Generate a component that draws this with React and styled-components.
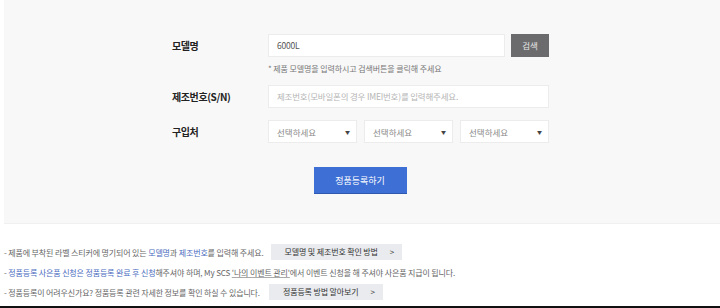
import React from "react";
import styled, { createGlobalStyle } from "styled-components";

const Global = createGlobalStyle`
  html, body {
    margin: 0;
    padding: 0;
    background: #fff;
  }
  body {
    font-family: "Noto Sans CJK KR", "Noto Sans", sans-serif;
  }
`;

const Page = styled.div`
  width: 720px;
  height: 308px;
  overflow: hidden;
  padding-left: 4px;
  box-sizing: border-box;
  border-bottom: 2px solid #111;
`;

const Panel = styled.div`
  background: #f8f8f8;
  padding: 34px 0 29px;
  border-bottom: 1px solid #f0f0f0;
`;

const Form = styled.div`
  margin-left: 168px;
  display: grid;
  grid-template-columns: 96px 281px;
  align-items: start;
`;

const Label = styled.div`
  font-size: 10px;
  font-weight: 700;
  color: #222;
  height: 23px;
  line-height: 23px;
  letter-spacing: -0.4px;
  margin-top: ${(p) => p.$top || 0}px;
`;

const Field = styled.div`
  margin-top: ${(p) => p.$top || 0}px;
`;

const InputRow = styled.div`
  display: flex;
  gap: 6px;
`;

const Input = styled.div`
  flex: 1;
  height: 23px;
  box-sizing: border-box;
  background: #fff;
  border: 1px solid #ececec;
  padding: 0 8px;
  font-size: 8.5px;
  line-height: 21px;
  color: ${(p) => (p.$placeholder ? "#b5b5b5" : "#555")};
  letter-spacing: -0.2px;
`;

const SearchButton = styled.div`
  width: 38px;
  height: 23px;
  background: #6b6b6d;
  color: #e6e6e6;
  font-size: 8.5px;
  line-height: 23px;
  text-align: center;
`;

const Hint = styled.div`
  margin-top: 6px;
  font-size: 8px;
  line-height: 11px;
  color: #777;
  letter-spacing: -0.1px;
`;

const Selects = styled.div`
  display: grid;
  grid-template-columns: repeat(3, 1fr);
  gap: 7px;
`;

const Select = styled.div`
  height: 23px;
  box-sizing: border-box;
  background: #fff;
  border: 1px solid #ececec;
  padding: 0 6px 0 8px;
  display: flex;
  align-items: center;
  justify-content: space-between;
  font-size: 8.5px;
  color: #8a8a8a;
`;

const Caret = styled.span`
  font-size: 5px;
  color: #444;
`;

const SubmitWrap = styled.div`
  display: flex;
  justify-content: center;
  margin-top: 24px;
  padding-right: 4px;
`;

const Submit = styled.div`
  width: 93px;
  height: 27px;
  background: #3e6fd5;
  border-bottom: 1px solid #2f58b0;
  box-sizing: border-box;
  color: #fff;
  font-size: 9px;
  line-height: 27px;
  text-align: center;
`;

const Notes = styled.div`
  padding-top: 20px;
  display: flex;
  flex-direction: column;
  gap: 4px;
`;

const Note = styled.div`
  display: flex;
  align-items: center;
  height: 16px;
  font-size: 8px;
  color: #666;
  letter-spacing: -0.14px;
  white-space: nowrap;
`;

const Blue = styled.span`
  color: #4a6cc0;
`;

const Under = styled.span`
  text-decoration: underline;
  text-decoration-color: #aaa;
`;

const NoteButton = styled.div`
  margin-left: ${(p) => p.$gap}px;
  height: 16px;
  background: #e9ebee;
  color: #333;
  font-size: 8px;
  line-height: 16px;
  padding: 0 8px 0 14px;
  display: flex;
  gap: ${(p) => p.$arrowGap}px;
  align-items: center;
`;

export default function App() {
  return (
    <>
      <Global />
      <Page>
        <Panel>
          <Form>
            <Label>모델명</Label>
            <Field>
              <InputRow>
                <Input>6000L</Input>
                <SearchButton>검색</SearchButton>
              </InputRow>
              <Hint>* 제품 모델명을 입력하시고 검색버튼을 클릭해 주세요</Hint>
            </Field>
            <Label $top={11}>제조번호(S/N)</Label>
            <Field $top={11}>
              <InputRow>
                <Input $placeholder>
                  제조번호(모바일폰의 경우 IMEI번호)를 입력해주세요.
                </Input>
              </InputRow>
            </Field>
            <Label $top={12}>구입처</Label>
            <Field $top={12}>
              <Selects>
                {[0, 1, 2].map((i) => (
                  <Select key={i}>
                    선택하세요
                    <Caret>▼</Caret>
                  </Select>
                ))}
              </Selects>
            </Field>
          </Form>
          <SubmitWrap>
            <Submit>정품등록하기</Submit>
          </SubmitWrap>
        </Panel>
        <Notes>
          <Note>
            - 제품에 부착된 라벨 스티커에 명기되어 있는&nbsp;<Blue>모델명</Blue>과&nbsp;
            <Blue>제조번호</Blue>를 입력해 주세요.
            <NoteButton $gap={7} $arrowGap={12}>
              모델명 및 제조번호 확인 방법 <span>&gt;</span>
            </NoteButton>
          </Note>
          <Note>
            -&nbsp;<Blue>정품등록 사은품 신청은 정품등록 완료 후 신청</Blue>해주셔야 하며, My SCS&nbsp;
            <Under>'나의 이벤트 관리'</Under>에서 이벤트 신청을 해 주셔야 사은품 지급이 됩니다.
          </Note>
          <Note>
            - 정품등록이 어려우신가요? 정품등록 관련 자세한 정보를 확인 하실 수 있습니다.
            <NoteButton $gap={9} $arrowGap={12}>
              정품등록 방법 알아보기 <span>&gt;</span>
            </NoteButton>
          </Note>
        </Notes>
      </Page>
    </>
  );
}
